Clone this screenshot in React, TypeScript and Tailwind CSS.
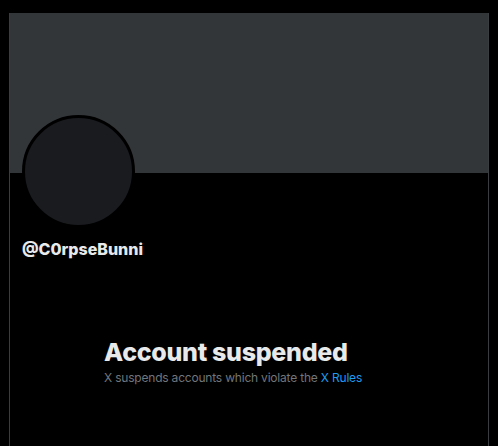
import React from "react";

export default function App() {
  return (
    <div
      className="w-[498px] h-[446px] bg-black overflow-hidden pt-[13px] pl-[9px]"
      style={{ fontFamily: "Inter, 'Noto Sans', sans-serif" }}
    >
      <div className="w-[480px] h-[433px] border-l border-r border-[#3a3d40] flex flex-col">
        <div className="h-[160px] bg-[#333639]" />
        <div className="-mt-[58px] ml-[12px] w-[113px] h-[113px] rounded-full bg-[#1a1b1f] border-[3px] border-black" />
        <div className="ml-[12px] mt-[11px] text-[16px] leading-[20px] font-extrabold text-[#e7e9ea]">
          @C0rpseBunni
        </div>
        <div className="ml-[94px] mt-[78px] flex flex-col">
          <div className="text-[25px] leading-[30px] font-extrabold text-[#e7e9ea] tracking-[-0.3px]">
            Account suspended
          </div>
          <div className="text-[12px] leading-[16px] mt-[3px] text-[#71767b] tracking-[-0.2px]">
            X suspends accounts which violate the{" "}
            <span className="text-[#1d9bf0]">X Rules</span>
          </div>
        </div>
      </div>
    </div>
  );
}
